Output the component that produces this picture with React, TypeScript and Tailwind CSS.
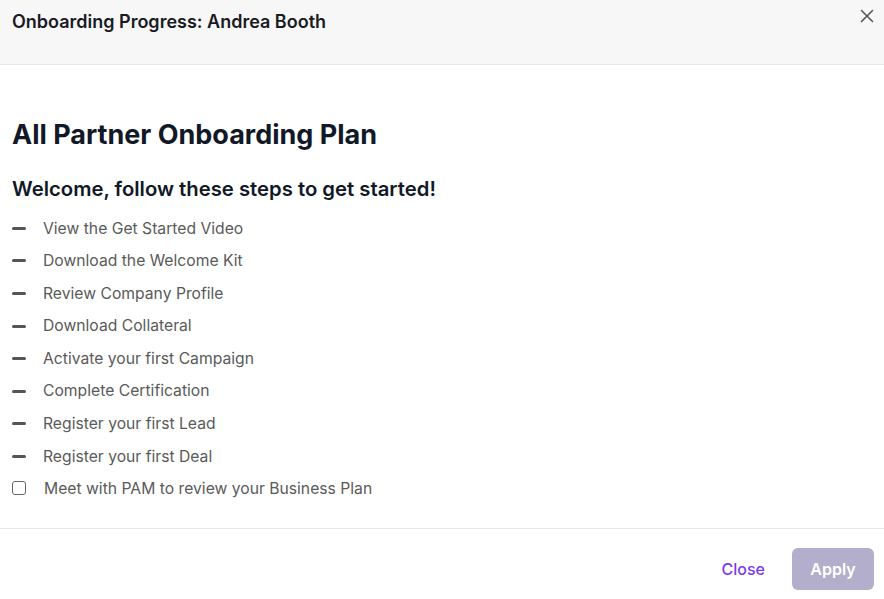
import React, {useState} from "react";

const steps = [
    "View the Get Started Video",
    "Download the Welcome Kit",
    "Review Company Profile",
    "Download Collateral",
    "Activate your first Campaign",
    "Complete Certification",
    "Register your first Lead",
    "Register your first Deal",
];

export default function App() {
    const [checked, setChecked] = useState(false);

    return (
        <div className="w-[884px] h-[599px] bg-white flex flex-col overflow-hidden" style={{fontFamily: "Inter, 'Noto Sans', sans-serif"}}>
            <div className="h-[65px] bg-[#f7f7f7] border-b border-[#e8e8e8] flex justify-between items-start px-3 shrink-0">
                <h2 className="text-[18px] font-semibold text-[#1a1a24] mt-[10px] leading-6">Onboarding Progress: Andrea Booth</h2>
                <button className="mt-[4px] -mr-[7px] text-[#555] p-1">
                    <svg width="16" height="16" viewBox="0 0 16 16" fill="none" stroke="currentColor" strokeWidth="1.6" strokeLinecap="round">
                        <path d="M2.5 2.5 L13.5 13.5 M13.5 2.5 L2.5 13.5" />
                    </svg>
                </button>
            </div>

            <div className="flex-1 px-3 pt-[53px]">
                <h1 className="text-[27px] font-bold text-[#111827] leading-[34px]">All Partner Onboarding Plan</h1>
                <h3 className="text-[20.3px] font-semibold text-[#111827] leading-7 mt-[23px]">Welcome, follow these steps to get started!</h3>
                <ul className="mt-[9px] flex flex-col">
                    {steps.map((step) => (
                        <li key={step} className="h-[32.6px] flex items-center">
                            <span className="w-[14px] h-[3px] bg-[#555] rounded-sm mr-[17px]" />
                            <span className="text-[15.7px] text-[#5a5a5a]">{step}</span>
                        </li>
                    ))}
                    <li className="h-[32.6px] flex items-center">
                        <input
                            type="checkbox"
                            checked={checked}
                            onChange={() => setChecked(!checked)}
                            className="w-[14px] h-[14px] mr-[18px] -mt-[3px] appearance-none border border-[#666] rounded-[3px] bg-white"
                        />
                        <span className="text-[15.7px] text-[#5a5a5a]">Meet with PAM to review your Business Plan</span>
                    </li>
                </ul>
            </div>

            <div className="h-[71px] border-t border-[#e8e8e8] flex justify-end items-start pt-[19px] pr-[10px] gap-[27px] shrink-0">
                <button className="text-[16px] font-medium text-[#7c3aed] h-[42px]">Close</button>
                <button className="w-[82px] h-[42px] rounded-md bg-[#b3aecb] text-white text-[16px] font-semibold">Apply</button>
            </div>
        </div>
    );
}
